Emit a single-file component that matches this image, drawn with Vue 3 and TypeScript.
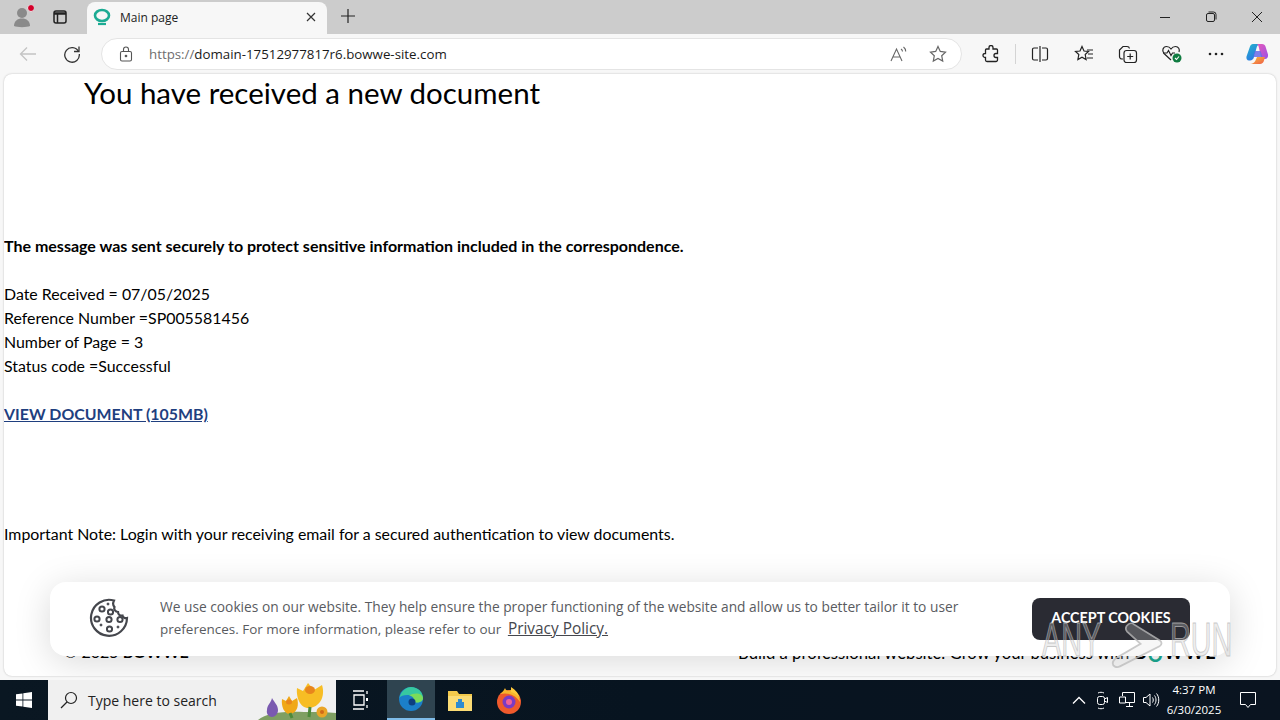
<script setup lang="ts">
const details = [
  'Date Received = 07/05/2025',
  'Reference Number =SP005581456',
  'Number of Page = 3',
  'Status code =Successful',
]
</script>

<template>
  <div class="screen">
    <div class="tabstrip">
      <div class="strip-btn profile">
        <svg width="24" height="24" viewBox="0 0 24 24">
          <circle cx="12" cy="8" r="5" fill="#8a8a8a" />
          <path d="M4 21c0-5 3.500-7.500 8-7.500s8 2.500 8 7.500c-3 1.500-13 1.500-16 0z" fill="#8a8a8a" />
          <circle cx="21" cy="3" r="3.500" fill="#d4002a" stroke="#e8e8e8" stroke-width="1" />
        </svg>
      </div>
      <div class="strip-btn tabs-btn">
        <svg width="16" height="16" viewBox="0 0 16 16" fill="none" stroke="#222" stroke-width="1.500">
          <rect x="2" y="2" width="12" height="12" rx="2" />
          <path d="M2 4.500h12" stroke-width="2.500" />
          <path d="M5.500 4.500V14" />
        </svg>
      </div>
      <div class="tab">
        <svg class="favicon" width="18" height="18" viewBox="0 0 18 18" fill="none">
          <ellipse cx="9" cy="7.500" rx="7" ry="5.500" stroke="#1cab93" stroke-width="2.600" />
          <path d="M5 16h8" stroke="#1cab93" stroke-width="2.200" />
        </svg>
        <span class="tab-title">Main page</span>
        <svg class="tab-close" width="10" height="10" viewBox="0 0 10 10" stroke="#333" stroke-width="1.200">
          <path d="M1 1l8 8M9 1l-8 8" />
        </svg>
      </div>
      <svg class="new-tab" width="16" height="16" viewBox="0 0 16 16" stroke="#222" stroke-width="1.200">
        <path d="M8 1v14M1 8h14" />
      </svg>
      <div class="win-controls">
        <svg width="46" height="12" viewBox="0 0 46 12" stroke="#222"><path d="M18 6.500h10" /></svg>
        <svg width="46" height="12" viewBox="0 0 46 12" fill="none" stroke="#222">
          <rect x="18.500" y="2.500" width="8" height="8" rx="1.500" />
          <path d="M20.500 1h5a2.500 2.500 0 0 1 2.500 2.500v5" />
        </svg>
        <svg width="46" height="12" viewBox="0 0 46 12" stroke="#222"><path d="M18 1l10 10M28 1l-10 10" /></svg>
      </div>
    </div>

    <div class="toolbar">
      <div class="tool-btn">
        <svg width="18" height="18" viewBox="0 0 18 18" fill="none" stroke="#c4c4c4" stroke-width="1.300">
          <path d="M17 9H1.500M8 2.500L1.500 9 8 15.500" />
        </svg>
      </div>
      <div class="tool-btn">
        <svg width="18" height="18" viewBox="0 0 18 18" fill="none" stroke="#333" stroke-width="1.300">
          <path d="M15.500 6.500A7.300 7.300 0 1 0 16.300 9" />
          <path d="M16 1.500v5h-5" />
        </svg>
      </div>
      <div class="address">
        <svg class="lock" width="14" height="16" viewBox="0 0 14 16" fill="none" stroke="#555" stroke-width="1.100">
          <rect x="1.500" y="5.500" width="11" height="9.500" rx="1.500" />
          <path d="M4.500 5.500V3.500a2.500 2.500 0 0 1 5 0v2" />
          <circle cx="7" cy="10" r="0.800" fill="#555" />
        </svg>
        <span class="url"><span class="url-scheme">https://</span>domain-17512977817r6.bowwe-site.com</span>
        <svg class="addr-icon read" width="18" height="16" viewBox="0 0 18 16" fill="none" stroke="#666" stroke-width="1.100">
          <path d="M1 15L6.500 3 12 15M3 11h7" />
          <path d="M11 3c1 .6 1.500 1.500 1.500 2.500M13.500 1c1.300 1 2.200 2.500 2.200 4.500" />
        </svg>
        <svg class="addr-icon" width="18" height="18" viewBox="0 0 18 18" fill="none" stroke="#666" stroke-width="1.200">
          <path d="M9 1.500l2.300 4.900 5.200.7-3.800 3.600 1 5.300L9 13.400 4.300 16l1-5.300L1.500 7.100l5.200-.7z" />
        </svg>
      </div>
      <div class="tool-btn ext">
        <svg width="18" height="18" viewBox="0 0 18 18" fill="none" stroke="#222" stroke-width="1.300">
          <path d="M7 2.500a2 2 0 0 1 4 0V4h3.500a1 1 0 0 1 1 1v3.500H14a2 2 0 0 0 0 4h1.500V15a1.500 1.500 0 0 1-1.500 1.500H5A1.500 1.500 0 0 1 3.500 15v-2.500H3a2 2 0 0 1 0-4h.500V5a1 1 0 0 1 1-1H7z" />
        </svg>
      </div>
      <div class="tool-sep"></div>
      <div class="tool-btn">
        <svg width="18" height="18" viewBox="0 0 18 18" fill="none" stroke="#222" stroke-width="1.200">
          <path d="M7 3H3a1.500 1.500 0 0 0-1.500 1.500v9A1.500 1.500 0 0 0 3 15h4M11 3h4a1.500 1.500 0 0 1 1.500 1.500v9A1.500 1.500 0 0 1 15 15h-4M9 1v16" />
        </svg>
      </div>
      <div class="tool-btn">
        <svg width="20" height="18" viewBox="0 0 20 18" fill="none" stroke="#222" stroke-width="1.200">
          <path d="M8 1.500l2 4.500 4.500.5-3.300 3 .9 5L8 12.200 3.900 14.500l.9-5-3.300-3 4.500-.5z" />
          <path d="M13 5h6M14 9h5M13 13h6" />
        </svg>
      </div>
      <div class="tool-btn">
        <svg width="20" height="20" viewBox="0 0 20 20" fill="none" stroke="#222" stroke-width="1.200">
          <path d="M5 15H4a2.500 2.500 0 0 1-2.500-2.500V6L5 2.500h4a2.500 2.500 0 0 1 2.500 2" />
          <rect x="6" y="6.500" width="12.500" height="12" rx="2.500" />
          <path d="M12.200 9.500v6M9.200 12.500h6" />
        </svg>
      </div>
      <div class="tool-btn">
        <svg width="22" height="20" viewBox="0 0 22 20" fill="none">
          <path d="M10 16L3 9.500C.5 7 2 2.500 5.500 2.500c2 0 3.500 1 4.500 2.500 1-1.500 2.500-2.500 4.500-2.500 3 0 4.500 3 3.500 5.500" stroke="#222" stroke-width="1.200" />
          <path d="M2 9h4l1.500-2.500 2.500 5 1.500-2.500H14" stroke="#222" stroke-width="1.100" />
          <circle cx="16" cy="14" r="4.500" fill="#107c41" />
          <path d="M14 14l1.500 1.500 2.500-3" stroke="#fff" stroke-width="1.100" />
        </svg>
      </div>
      <div class="tool-btn dots">
        <svg width="16" height="4" viewBox="0 0 16 4" fill="#222">
          <circle cx="2" cy="2" r="1.300" /><circle cx="8" cy="2" r="1.300" /><circle cx="14" cy="2" r="1.300" />
        </svg>
      </div>
      <div class="copilot">
        <svg width="24" height="24" viewBox="0 0 24 24">
          <defs>
            <linearGradient id="cpLeft" x1="0" y1="0" x2="0.700" y2="1">
              <stop offset="0" stop-color="#25b8c8" />
              <stop offset="1" stop-color="#2a6fe8" />
            </linearGradient>
            <linearGradient id="cpRight" x1="0" y1="0" x2="1" y2="1">
              <stop offset="0" stop-color="#e85ab8" />
              <stop offset="1" stop-color="#9a50e8" />
            </linearGradient>
            <linearGradient id="cpBottom" x1="0" y1="0" x2="1" y2="1">
              <stop offset="0" stop-color="#f7c23c" />
              <stop offset="1" stop-color="#ef5a48" />
            </linearGradient>
          </defs>
          <path d="M8 2h7c-2 .5-3 2-3.500 4L9 15c-.5 2-2 3.500-4 3.500H4C2 18.500 1 16.500 1.500 14.500L5 4.500C5.500 3 6.500 2 8 2z" fill="url(#cpLeft)" />
          <path d="M12 2h5c2 0 3 1 3.500 2.500l2.500 8c.5 2.500-1 4.500-3 4.500h-3.500L14 6c-.4-2-1-3.500-2-4z" fill="url(#cpRight)" />
          <path d="M5 22h10c2 0 3.500-1.500 4-3.500l1-3.500H12l-1.500 3.500C9.500 20.500 7.500 22 5 22z" fill="url(#cpBottom)" />
          <path d="M10 9h5.500l2 6H8.500z" fill="#6a6ae8" opacity="0.85" />
        </svg>
      </div>
    </div>

    <main class="page">
      <h1 class="title">You have received a new document</h1>
      <p class="lead">The message was sent securely to protect sensitive information included in the correspondence.</p>
      <div class="details">
        <div v-for="line in details" :key="line">{{ line }}</div>
      </div>
      <a class="doc-link" href="#">VIEW DOCUMENT (105MB)</a>
      <p class="note">Important Note: Login with your receiving email for a secured authentication to view documents.</p>
      <footer class="site-footer">
        <span class="copyright">© 2025 <b>BOWWE</b></span>
        <span class="promo">Build a professional website. Grow your business with <b class="brand">B<i>O</i>WWE</b></span>
      </footer>

      <div class="cookie-bar">
        <svg class="cookie-icon" width="40" height="40" viewBox="0 0 40 40" fill="none" stroke="#45474d">
          <path d="M25 2.500A18 18 0 1 0 38 20c-2 .5-4-.5-4.500-2.500-2.500.5-4.500-1-4.500-3.500-2.500 0-4.500-2.500-3.500-5-1.500-1.500-1.500-4.500-.5-6.500z" stroke-width="2.200" />
          <circle cx="13" cy="11" r="2.600" stroke-width="2" />
          <circle cx="21.500" cy="14" r="2.600" stroke-width="2" />
          <circle cx="8" cy="21" r="2.600" stroke-width="2" />
          <circle cx="20" cy="21.500" r="2.600" stroke-width="2" />
          <circle cx="31" cy="21.500" r="2.600" stroke-width="2" />
          <circle cx="20.500" cy="31" r="2.600" stroke-width="2" />
          <circle cx="12" cy="27" r="1" fill="#45474d" />
          <circle cx="29" cy="29" r="1" fill="#45474d" />
          <circle cx="19" cy="6" r="1" fill="#45474d" />
        </svg>
        <p class="cookie-text">
          We use cookies on our website. They help ensure the proper functioning of the website and allow us to better tailor it to user<br />
          <span class="cookie-second">preferences. For more information, please refer to our</span> <a class="policy" href="#">Privacy Policy.</a>
        </p>
        <button class="accept">ACCEPT COOKIES</button>
      </div>

      <div class="watermark">
        <span class="wm-text">ANY</span>
        <svg class="wm-play" width="54" height="47" viewBox="0 0 60 54" preserveAspectRatio="none" fill="rgba(225,225,225,0.3)" stroke="#bdbdbd" stroke-width="2" opacity="0.8">
          <path d="M20 3c2-2 5-2 7 0l28 18c3 2 3 5 0 7L11 51c-4 2-8 0-8-4 0-2 1-3 3-5l28-17L19 11c-2-2-2-6 1-8z" />
        </svg>
        <span class="wm-text">RUN</span>
      </div>
    </main>

    <div class="taskbar">
      <div class="start">
        <svg width="16" height="16" viewBox="0 0 16 16" fill="#fff">
          <path d="M0 2.300l6.500-.9v6.200H0zM7.300 1.300L16 0v7.600H7.300zM0 8.400h6.500v6.200L0 13.700zM7.300 8.400H16V16l-8.700-1.200z" />
        </svg>
      </div>
      <div class="search">
        <svg width="18" height="18" viewBox="0 0 18 18" fill="none" stroke="#222" stroke-width="1.200">
          <circle cx="11" cy="7" r="5.500" /><path d="M7 11l-6 6" />
        </svg>
        <span>Type here to search</span>
        <svg class="flowers" width="82" height="40" viewBox="0 0 82 40">
          <path d="M4 40C12 33 30 31 50 32c12 0 24 0 32 1v7z" fill="#7f9f62" />
          <path d="M18 18c2 4 6 7 6 12 0 4-3 7-6 7s-6-3-5-7c0-5 4-7 5-12z" fill="#7a5ab0" />
          <path d="M28 19l4 2 3-5 3 5 5-3c2 6 1 15-7 16-6 0-9-8-8-15z" fill="#f0a818" />
          <path d="M43 8l6 3 5-8 6 7 8-5c3 9 0 21-12 23-10 1-14-11-13-20z" fill="#f7bd24" />
          <ellipse cx="56" cy="10" rx="5" ry="4" fill="#e8861c" />
          <ellipse cx="35" cy="22" rx="3" ry="2.500" fill="#e8861c" />
          <path d="M56 27l-1 10M36 33l2 5" stroke="#4d8a3a" stroke-width="3" />
          <circle cx="68" cy="32" r="5.500" fill="#eaa526" />
          <circle cx="68" cy="32" r="2" fill="#d06a18" />
        </svg>
      </div>
      <div class="task-app view">
        <svg width="16" height="20" viewBox="0 0 16 20" fill="none" stroke="#fff" stroke-width="1.300">
          <path d="M1 1h11M1 19h11M2 5h10v10H2z" />
          <rect x="14" y="8" width="2" height="3" fill="#fff" stroke="none" />
          <path d="M15 1v3M15 15v3" />
        </svg>
      </div>
      <div class="task-app active">
        <svg width="26" height="26" viewBox="0 0 26 26">
          <circle cx="13" cy="13" r="12" fill="#1b7fc9" />
          <path d="M1.500 12C3 5 8 1 13 1c7 0 12 5 12 11 0 3-3 4.500-6 4.500-2 0-3-1-3-2 1-1 1-4-3-5-5-1-10 0-12 2.500z" fill="#37c9a0" />
          <path d="M25 12c0 3-3 4.500-6 4.500s-4-2-3-3c-1-3-3-4-5-4 5-3 13-3 14 2.500z" fill="#7bdc5a" />
          <circle cx="14" cy="16" r="3.500" fill="#0d3f80" />
        </svg>
      </div>
      <div class="task-app spaced">
        <svg width="26" height="24" viewBox="0 0 26 24">
          <path d="M1 3h9l2 3h13v17H1z" fill="#f2c94c" />
          <path d="M1 8h24v15H1z" fill="#fbdc75" />
          <path d="M9 14h8v6H9z" fill="#2d8bd0" />
          <path d="M11 11h4v3h-4z" fill="#2d8bd0" />
        </svg>
      </div>
      <div class="task-app spaced">
        <svg width="26" height="28" viewBox="0 0 26 28">
          <circle cx="13" cy="16" r="12" fill="#ef5a2c" />
          <path d="M4 8c3-2 4-4 5-6 1 3 3 3 6 2 4 1 9 6 9 12C20 9 12 6 4 8z" fill="#f7b52c" />
          <path d="M15 1c5 3 8 7 9 12-2-4-5-6-9-7z" fill="#ffc93c" />
          <circle cx="13" cy="16" r="6.500" fill="#7b3bc4" />
          <circle cx="13" cy="16" r="3" fill="#f0609a" />
        </svg>
      </div>
      <div class="tray">
        <svg class="chevron" width="14" height="8" viewBox="0 0 14 8" fill="none" stroke="#fff" stroke-width="1.300"><path d="M1 7.500l6-6 6 6" /></svg>
        <svg class="tray-icon narrow" width="16" height="20" viewBox="0 0 16 20" fill="none" stroke="#fff">
          <rect x="2.500" y="6.500" width="7" height="8" rx="2" />
          <path d="M9.500 9l3-1.500v5l-3-1.500M3 3c2-1 4-1 6 0M3 18c2 1 4 1 6 0" />
        </svg>
        <svg class="tray-icon" width="18" height="18" viewBox="0 0 18 18" fill="none" stroke="#fff">
          <path d="M4.500 5V1.500h12v10H8M1.500 6h6v6h-6zM8 15.500h7M11.500 11.500v4" />
        </svg>
        <svg class="tray-icon" width="18" height="16" viewBox="0 0 18 16" fill="none" stroke="#fff">
          <path d="M1.500 5.500h2.500L8 2v12l-4-3.500H1.500zM10.500 5.500c1 1.500 1 3.500 0 5M12.500 3.500c2 2.500 2 6.500 0 9M14.500 1.500c3 3.500 3 9.500 0 13" />
        </svg>
        <div class="clock">
          <div>4:37 PM</div>
          <div>6/30/2025</div>
        </div>
        <svg class="notify" width="18" height="18" viewBox="0 0 18 18" fill="none" stroke="#fff">
          <path d="M1.500 1.500h15v12h-5l-2.500 3-2.500-3h-5z" />
        </svg>
      </div>
    </div>
  </div>
</template>

<style>
html,
body {
  margin: 0;
  overflow: hidden;
}
</style>

<style scoped>
.screen {
  width: 1280px;
  height: 720px;
  display: flex;
  flex-direction: column;
  background: #f7f7f7;
  font-family: "Lato", "Liberation Sans", sans-serif;
  color: #000;
  overflow: hidden;
}

.tabstrip {
  height: 34px;
  flex: none;
  display: flex;
  align-items: flex-end;
  background: #cccccc;
}
.strip-btn {
  height: 34px;
  display: flex;
  align-items: center;
  justify-content: center;
}
.profile {
  width: 44px;
}
.tabs-btn {
  width: 32px;
}
.tab {
  margin-left: 11px;
  width: 240px;
  height: 32px;
  display: flex;
  align-items: center;
  box-sizing: border-box;
  padding: 0 11px 2px 6px;
  background: #f7f7f7;
  border-radius: 8px 8px 0 0;
}
.tab-title {
  margin-left: 9px;
  flex: 1;
  font: 12px "Open Sans", sans-serif;
  color: #222;
}
.new-tab {
  margin: 0 0 10px 13px;
}
.win-controls {
  margin-left: auto;
  height: 34px;
  display: flex;
  align-items: center;
}

.toolbar {
  height: 40px;
  flex: none;
  box-sizing: border-box;
  padding: 4px 0 4px 6px;
  display: flex;
  align-items: center;
  background: #f7f7f7;
}
.tool-btn {
  width: 44px;
  height: 32px;
  flex: none;
  display: flex;
  align-items: center;
  justify-content: center;
}
.ext {
  margin-left: 7px;
}
.tool-sep {
  width: 1px;
  height: 20px;
  margin: 0 2px;
  background: #d4d4d4;
}
.copilot {
  margin-left: -1px;
  width: 40px;
  display: flex;
  justify-content: center;
}
.address {
  width: 861px;
  height: 32px;
  flex: none;
  margin-left: 7px;
  box-sizing: border-box;
  padding-left: 17px;
  display: flex;
  align-items: center;
  background: #fff;
  border: 1px solid #e4e4e4;
  border-radius: 16px;
}
.url {
  margin-left: 16px;
  flex: 1;
  font: 13.300px "Open Sans", sans-serif;
  color: #1a1a1a;
}
.url-scheme {
  color: #6e6e6e;
}
.addr-icon {
  margin-right: 14px;
}
.read {
  margin-right: 21px;
}

.page {
  position: relative;
  height: 602px;
  flex: none;
  margin: 0 4px;
  background: #fff;
  border-radius: 8px;
  box-shadow: 0 0 2px rgba(0, 0, 0, 0.25);
  font-size: 15.900px;
  line-height: 24px;
  overflow: hidden;
}
.title {
  margin: 0;
  padding-left: 80px;
  height: 160px;
  font-size: 29.500px;
  font-weight: 400;
  line-height: 38px;
}
.lead {
  margin: 0 0 24px;
  font-size: 16px;
  font-weight: 700;
}
.details {
  margin-bottom: 24px;
}
.doc-link {
  display: block;
  width: max-content;
  font-weight: 700;
  color: #1f3f7f;
}
.note {
  margin: 96px 0 0;
}
.site-footer {
  margin-top: 94px;
  padding: 0 59px 0 60px;
  display: flex;
  justify-content: space-between;
}
.copyright {
  font-size: 16px;
}
.promo {
  font-size: 16.700px;
}
.brand {
  font-size: 18px;
  font-weight: 900;
  letter-spacing: 1.500px;
  margin-left: 1px;
}
.brand i {
  font-style: normal;
  color: #1cab93;
  vertical-align: -3px;
}

.cookie-bar {
  position: absolute;
  left: 46px;
  top: 508px;
  width: 1180px;
  height: 74px;
  display: flex;
  align-items: center;
  box-sizing: border-box;
  padding-left: 39px;
  background: #fff;
  border-radius: 16px;
  box-shadow: 0 6px 36px rgba(0, 0, 0, 0.15);
}
.cookie-icon {
  margin-bottom: 2px;
}
.cookie-text {
  margin: 0 0 2px 31px;
  width: 872px;
  flex: none;
  font: 13.750px/22px "Open Sans", sans-serif;
  color: #595b60;
}
.cookie-second {
  font-size: 13.480px;
}
.policy {
  margin-left: 3px;
  font-size: 15.400px;
  line-height: 1;
  color: #45474d;
}
.accept {
  width: 158px;
  height: 42px;
  margin: 0;
  padding: 0 0 3px;
  border: 0;
  border-radius: 8px;
  background: #2a2b33;
  color: #fff;
  font: 700 14.300px "Lato", sans-serif;
}

.watermark {
  position: absolute;
  left: 1038px;
  top: 528px;
  width: 192px;
  height: 76px;
  pointer-events: none;
}
.wm-text {
  position: absolute;
  top: 0;
  font: 400 48px/76px "Liberation Sans", sans-serif;
  color: rgba(200, 200, 200, 0.32);
  -webkit-text-stroke: 1px rgba(185, 185, 185, 0.75);
  transform: scaleX(0.6);
  transform-origin: left center;
  white-space: nowrap;
}
.wm-text:first-child {
  left: 0;
}
.wm-text:last-child {
  left: 128px;
}
.wm-play {
  position: absolute;
  left: 68px;
  top: 20px;
}

.taskbar {
  height: 40px;
  flex: none;
  margin-top: 4px;
  display: flex;
  align-items: center;
  background: linear-gradient(90deg, #0a1722, #071420 50%, #0a1420);
}
.start {
  width: 48px;
  display: flex;
  justify-content: center;
}
.search {
  position: relative;
  width: 288px;
  height: 40px;
  box-sizing: border-box;
  padding-left: 12px;
  display: flex;
  align-items: center;
  gap: 10px;
  background: #f0f0f0;
  font: 14px "Open Sans", sans-serif;
  color: #222;
  overflow: hidden;
}
.flowers {
  position: absolute;
  right: 0;
  bottom: 0;
}
.task-app {
  width: 48px;
  height: 40px;
  flex: none;
  box-sizing: border-box;
  display: flex;
  align-items: center;
  justify-content: center;
}
.view {
  width: 51px;
  padding-right: 3px;
}
.spaced {
  margin-left: 1px;
}
.active {
  background: #2f4450;
  border-bottom: 2px solid #7fbce8;
}
.tray {
  margin-left: auto;
  height: 40px;
  display: flex;
  align-items: center;
}
.chevron {
  margin-right: 5px;
}
.tray-icon {
  margin: 0 3px;
}
.narrow {
  margin: 0 4px;
}
.clock {
  width: 62px;
  text-align: center;
  font: 11.500px/20px "Open Sans", sans-serif;
  color: #fff;
}
.notify {
  margin: 0 23px 0 14px;
}
</style>
